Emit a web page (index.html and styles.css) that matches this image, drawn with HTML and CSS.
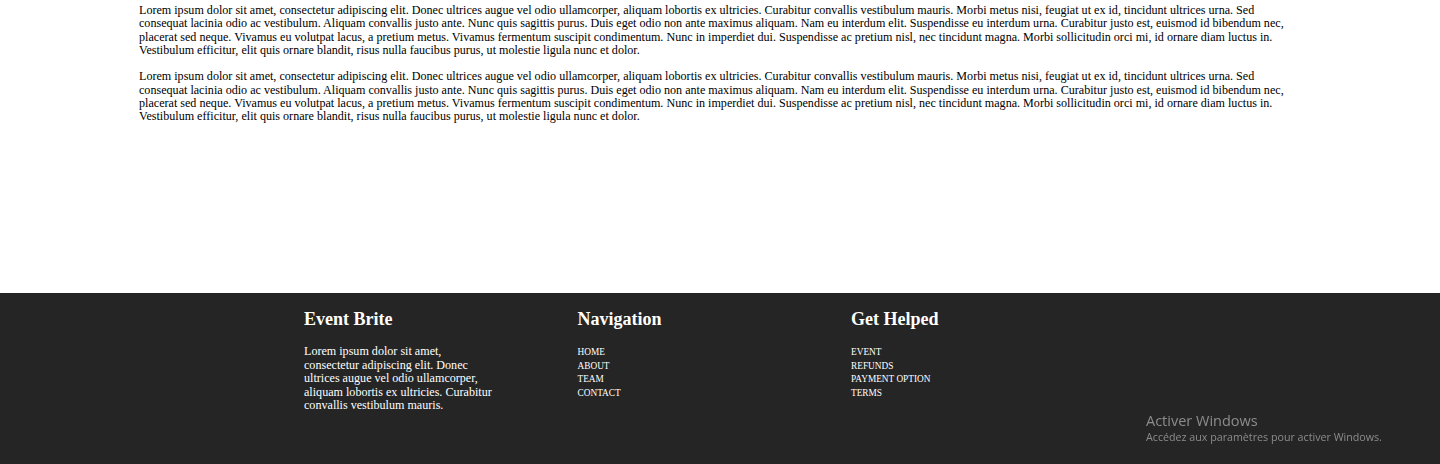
FILE: index.html
```html
<!DOCTYPE html>
<html lang="en">
<head>
<meta charset="utf-8">
<title>Event Brite</title>
<link rel="stylesheet" href="styles.css">
</head>
<body>
<main class="content">
  <p>Lorem ipsum dolor sit amet, consectetur adipiscing elit. Donec ultrices augue vel odio ullamcorper, aliquam lobortis ex ultricies. Curabitur convallis vestibulum mauris. Morbi metus nisi, feugiat ut ex id, tincidunt ultrices urna. Sed consequat lacinia odio ac vestibulum. Aliquam convallis justo ante. Nunc quis sagittis purus. Duis eget odio non ante maximus aliquam. Nam eu interdum elit. Suspendisse eu interdum urna. Curabitur justo est, euismod id bibendum nec, placerat sed neque. Vivamus eu volutpat lacus, a pretium metus. Vivamus fermentum suscipit condimentum. Nunc in imperdiet dui. Suspendisse ac pretium nisl, nec tincidunt magna. Morbi sollicitudin orci mi, id ornare diam luctus in. Vestibulum efficitur, elit quis ornare blandit, risus nulla faucibus purus, ut molestie ligula nunc et dolor.</p>
  <p>Lorem ipsum dolor sit amet, consectetur adipiscing elit. Donec ultrices augue vel odio ullamcorper, aliquam lobortis ex ultricies. Curabitur convallis vestibulum mauris. Morbi metus nisi, feugiat ut ex id, tincidunt ultrices urna. Sed consequat lacinia odio ac vestibulum. Aliquam convallis justo ante. Nunc quis sagittis purus. Duis eget odio non ante maximus aliquam. Nam eu interdum elit. Suspendisse eu interdum urna. Curabitur justo est, euismod id bibendum nec, placerat sed neque. Vivamus eu volutpat lacus, a pretium metus. Vivamus fermentum suscipit condimentum. Nunc in imperdiet dui. Suspendisse ac pretium nisl, nec tincidunt magna. Morbi sollicitudin orci mi, id ornare diam luctus in. Vestibulum efficitur, elit quis ornare blandit, risus nulla faucibus purus, ut molestie ligula nunc et dolor.</p>
</main>
<footer class="footer">
  <div class="footer-inner">
    <section class="col">
      <h2 class="col-title">Event Brite</h2>
      <p class="col-text">Lorem ipsum dolor sit amet, consectetur adipiscing elit. Donec ultrices augue vel odio ullamcorper, aliquam lobortis ex ultricies. Curabitur convallis vestibulum mauris.</p>
    </section>
    <section class="col">
      <h2 class="col-title">Navigation</h2>
      <ul class="links">
        <li>HOME</li>
        <li>ABOUT</li>
        <li>TEAM</li>
        <li>CONTACT</li>
      </ul>
    </section>
    <section class="col">
      <h2 class="col-title">Get Helped</h2>
      <ul class="links">
        <li>EVENT</li>
        <li>REFUNDS</li>
        <li>PAYMENT OPTION</li>
        <li>TERMS</li>
      </ul>
    </section>
  </div>
</footer>
<div class="activation">
  <div class="activation-title">Activer Windows</div>
  <div class="activation-sub">Accédez aux paramètres pour activer Windows.</div>
</div>
</body>
</html>
```
FILE: styles.css
```css
html, body {
  margin: 0;
  padding: 0;
}
body {
  font-family: "Liberation Serif", "Times New Roman", serif;
  color: #000;
  background: #fff;
  height: 464px;
  overflow: hidden;
}
.content {
  padding: 4px 139px 0;
  height: 293px;
  box-sizing: border-box;
}
.content p {
  margin: 0 0 12.5px;
  font-size: 12.1px;
  line-height: 13.4px;
}
.footer {
  background: #252525;
  color: #fff;
  height: 171px;
  box-sizing: border-box;
  padding-top: 16px;
}
.footer-inner {
  display: grid;
  grid-template-columns: 273.5px 273.5px 273.5px;
  margin-left: 304px;
}
.col-title {
  margin: 0 0 15px;
  font-size: 18px;
  font-weight: bold;
  line-height: 21px;
}
.col-text {
  margin: 0;
  max-width: 195px;
  font-size: 12.1px;
  line-height: 13.5px;
}
.links {
  list-style: none;
  margin: 0;
  padding: 1px 0 0;
  font-size: 9.3px;
  line-height: 13.5px;
}
.activation {
  position: fixed;
  left: 1146px;
  top: 411px;
  font-family: "Open Sans", "Noto Sans", sans-serif;
  color: #8c8c8c;
}
.activation-title {
  font-size: 14.5px;
  line-height: 19px;
}
.activation-sub {
  font-size: 10.7px;
  line-height: 14px;
}
```
